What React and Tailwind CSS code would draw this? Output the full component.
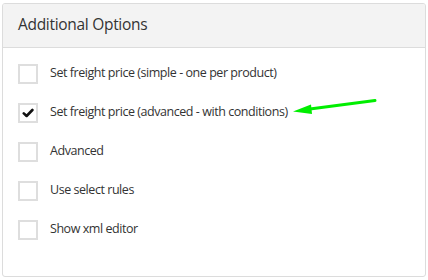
const options = [
  { label: 'Set freight price (simple - one per product)', checked: false },
  { label: 'Set freight price (advanced - with conditions)', checked: true },
  { label: 'Advanced', checked: false },
  { label: 'Use select rules', checked: false },
  { label: 'Show xml editor', checked: false },
];

function Checkbox({ checked }) {
  return (
    <span className="flex h-[20px] w-[20px] shrink-0 items-center justify-center border-2 border-[#dedede] bg-white">
      {checked && (
        <svg width="12" height="10" viewBox="0 0 12 10">
          <path d="M1.8 5.4 L4.6 8 L10.4 2" fill="none" stroke="#111" strokeWidth="2.6" strokeLinecap="round" strokeLinejoin="round" />
        </svg>
      )}
    </span>
  );
}

export default function App() {
  return (
    <div className="relative h-[280px] w-[428px] bg-white pl-[2px] pt-[3px]" style={{ fontFamily: '"Open Sans", "Noto Sans", sans-serif' }}>
      <div className="h-[274px] w-[424px] overflow-hidden rounded-[3px] border border-[#dcdcdc]">
        <div className="flex h-[44px] items-center border-b border-[#dcdcdc] bg-[#f3f3f3] pb-[1px] pl-[15px]">
          <h2 className="text-[15.5px] tracking-[-0.3px] text-[#333]">Additional Options</h2>
        </div>
        <div className="flex flex-col gap-[19px] pl-[15px] pt-[16px]">
          {options.map((opt) => (
            <label key={opt.label} className="flex h-[20px] items-center gap-[12px]">
              <Checkbox checked={opt.checked} />
              <span className="pb-[1px] text-[12.5px] tracking-[-0.45px] text-[#333]">{opt.label}</span>
            </label>
          ))}
        </div>
      </div>
      <svg className="absolute left-0 top-0" width="428" height="280" viewBox="0 0 428 280">
        <line x1="375" y1="100.5" x2="306" y2="109.5" stroke="#00ee00" strokeWidth="3" strokeLinecap="round" />
        <polygon points="293,111.5 311,104.5 312,114" fill="#00ee00" />
      </svg>
    </div>
  );
}
